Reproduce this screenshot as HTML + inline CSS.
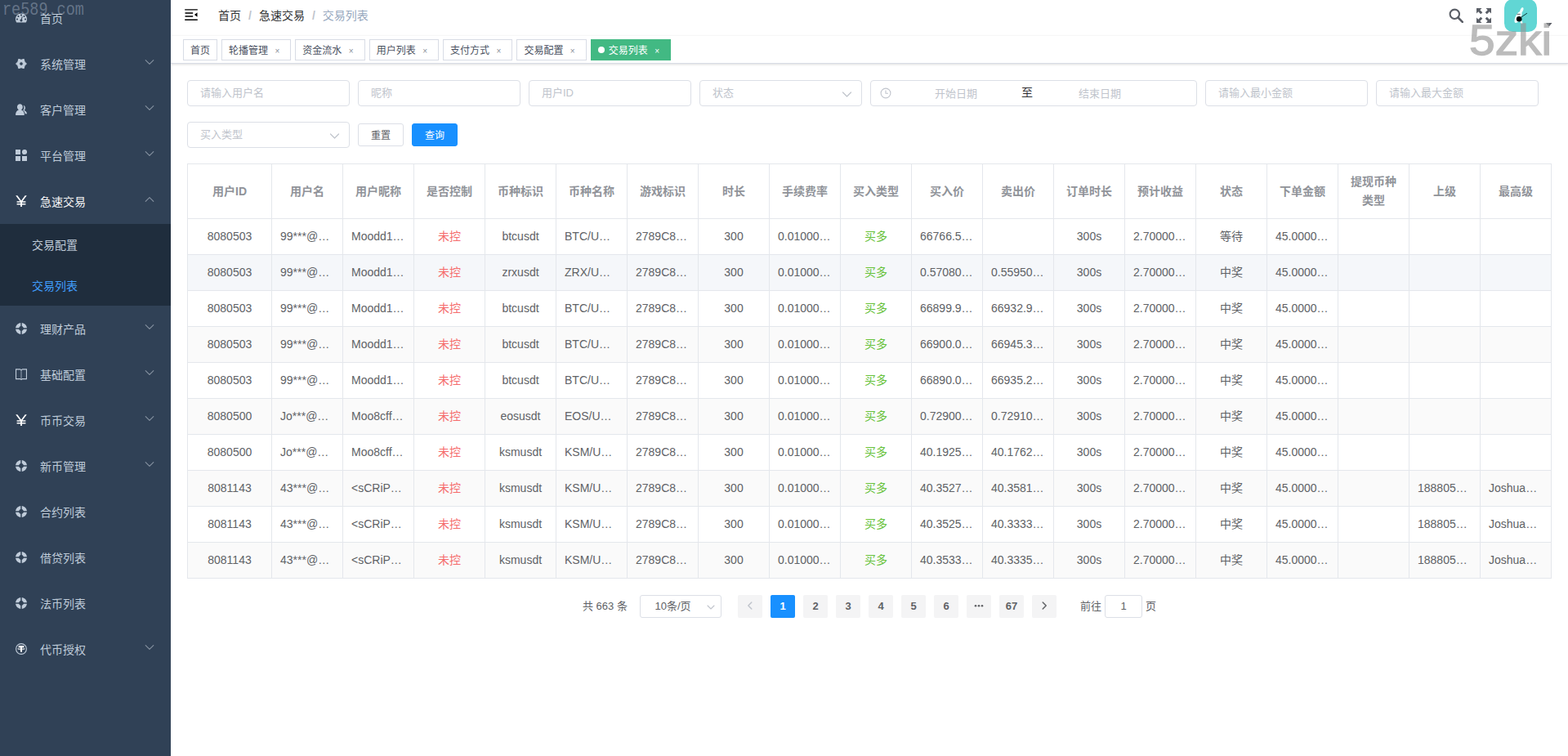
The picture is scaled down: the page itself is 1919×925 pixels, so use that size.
<!DOCTYPE html>
<html lang="zh-CN">
<head>
<meta charset="utf-8">
<title>交易列表</title>
<style>
*{box-sizing:border-box;}
html,body{margin:0;padding:0;}
body{width:1919px;height:925px;overflow:hidden;background:#fff;position:relative;
  font-family:"Liberation Sans","Noto Sans CJK SC",sans-serif;font-size:14px;color:#606266;
  -webkit-font-smoothing:antialiased;text-rendering:optimizeLegibility;}
svg{display:inline-block;}
/* ---------- sidebar ---------- */
#sidebar{position:absolute;left:0;top:0;width:209px;height:925px;background:#304156;overflow:hidden;}
#menu{position:absolute;left:-1px;top:-6px;width:210px;margin:0;padding:0;list-style:none;}
#menu li{list-style:none;margin:0;padding:0;}
#menu .mi{position:relative;height:56px;line-height:56px;padding-left:20px;font-size:14px;color:#bfcbd9;white-space:nowrap;}
#menu .mi svg.ic{width:14px;height:14px;vertical-align:-2.1px;margin-right:16px;fill:currentColor;overflow:hidden;}
#menu .mi>span.tx,#menu .si>span{position:relative;top:1px;}
#menu .mi .arr{position:absolute;right:20px;top:50%;margin-top:-8px;width:12px;height:12px;}
#menu .mi .arr svg{display:block;width:12px;height:12px;}
.sub{background:#1f2d3d;margin:0;padding:0;}
#menu .sub .si{height:50px;line-height:50px;padding-left:40px;font-size:14px;color:#bfcbd9;}
#menu .sub .si.on{color:#409eff;}
/* ---------- navbar ---------- */
#main{position:absolute;left:209px;top:0;width:1710px;height:925px;overflow:hidden;}
#navbar{position:absolute;left:0;top:-6px;width:1710px;height:50px;background:#fff;box-shadow:0 1px 4px rgba(0,21,41,.08);}
#ham{position:absolute;left:0;top:0;height:50px;padding:0 15px;line-height:46px;}
#ham svg{width:20px;height:20px;vertical-align:middle;}
#bc{position:absolute;left:58px;top:0;height:50px;line-height:50px;font-size:14px;white-space:nowrap;}
#bc span.a{color:#303133;}
#bc span.s{margin:0 9px;color:#c0c4cc;font-weight:700;}
#bc span.l{color:#97a8be;}
#rm{position:absolute;right:0;top:0;height:50px;}
/* ---------- tags ---------- */
#tags{position:absolute;left:0;top:44px;width:1710px;height:34px;background:#fff;border-bottom:1px solid #d8dce5;
  box-shadow:0 1px 3px 0 rgba(0,0,0,.12),0 0 3px 0 rgba(0,0,0,.04);white-space:nowrap;font-size:0;}
.tag{display:inline-block;position:relative;height:26px;line-height:24px;border:1px solid #d8dce5;color:#495060;background:#fff;
  padding:0 8px;font-size:12px;margin-left:5px;margin-top:4px;vertical-align:top;}
.tag:first-child{margin-left:15px;}
.tag .x{display:inline-block;width:16px;height:16px;line-height:16px;text-align:center;vertical-align:-1px;margin-left:3.33px;font-size:10px;color:#8c919b;}
.tag.on{background:#42b983;color:#fff;border-color:#42b983;}
.tag.on .x{color:#fff;}
.tag .tx{position:relative;top:1px;}
.tag.on:before{content:"";background:#fff;display:inline-block;width:8px;height:8px;border-radius:50%;position:relative;margin-right:5px;}
/* ---------- content ---------- */
#content{position:absolute;left:0;top:78px;width:1710px;padding:20px;}
.inp{position:absolute;height:32px;border:1px solid #dcdfe6;border-radius:4px;background:#fff;font-size:13px;color:#c0c4cc;line-height:30px;padding:0 15px;white-space:nowrap;}
.btn{position:absolute;height:28px;line-height:28px;border:1px solid #dcdfe6;border-radius:3px;background:#fff;color:#606266;font-size:12px;text-align:center;padding:0;}
.btn.pri{background:#1890ff;border-color:#1890ff;color:#fff;}
/* ---------- table ---------- */
#tbl{position:absolute;left:20px;top:200px;width:1670px;border-collapse:separate;border-spacing:0;table-layout:fixed;
  border-top:1px solid #e4e7ec;border-left:1px solid #e4e7ec;font-size:14px;color:#606266;}
#tbl th,#tbl td{border-right:1px solid #e4e7ec;border-bottom:1px solid #e4e7ec;padding:10px 0;text-align:center;vertical-align:middle;}
#tbl th{color:#909399;font-weight:bold;background:#fff;}
#tbl .c{padding:0 10px;line-height:23px;white-space:nowrap;overflow:hidden;}
#tbl th .c{white-space:normal;}
#tbl td.t{text-align:left;}
#tbl tr.st td{background:#fafafa;}
#tbl tr.hv td{background:#f5f7fa;}
.r{color:#f56c6c;} .g{color:#67c23a;}
/* ---------- pagination ---------- */
#pg{position:absolute;left:0;top:0;width:1710px;height:0;font-size:13px;color:#606266;}
#pg>*{position:absolute;}
.pb{height:28px;line-height:28px;min-width:30px;border-radius:2px;background:#f4f4f5;color:#606266;font-weight:700;font-size:13px;text-align:center;}
.pb.on{background:#1890ff;color:#fff;}
/* ---------- watermark ---------- */
.wm1{position:absolute;left:3px;top:1.5px;font-family:"Liberation Mono","DejaVu Sans Mono",monospace;font-size:18.5px;line-height:24px;color:rgba(200,212,228,.36);white-space:nowrap;transform:scaleY(1.15);transform-origin:0 19px;}
.wm2{position:absolute;left:1797.5px;top:18px;font-family:"Liberation Sans",sans-serif;font-size:51px;line-height:64px;color:#969696;-webkit-text-stroke:1.3px #969696;opacity:.63;white-space:nowrap;transform:scaleX(1.115);transform-origin:0 0;}
</style>
</head>
<body>
<div id="sidebar"><ul id="menu">
<li class="mi"><svg class="ic" viewBox="0 0 128 100"><path d="M27.429 63.638c0-2.508-.893-4.65-2.679-6.424-1.786-1.775-3.94-2.662-6.464-2.662-2.524 0-4.679.887-6.465 2.662-1.785 1.774-2.678 3.916-2.678 6.424 0 2.508.893 4.65 2.678 6.424 1.786 1.775 3.94 2.662 6.465 2.662 2.524 0 4.678-.887 6.464-2.662 1.786-1.775 2.679-3.916 2.679-6.424zm13.714-31.801c0-2.508-.893-4.649-2.679-6.424-1.785-1.775-3.94-2.662-6.464-2.662-2.524 0-4.679.887-6.464 2.662-1.786 1.775-2.679 3.916-2.679 6.424 0 2.508.893 4.65 2.679 6.424 1.785 1.774 3.94 2.662 6.464 2.662 2.524 0 4.679-.888 6.464-2.662 1.786-1.775 2.679-3.916 2.679-6.424zM71.714 65.98l7.215-27.116c.285-1.23.107-2.378-.536-3.443-.643-1.064-1.56-1.762-2.75-2.094-1.19-.33-2.333-.177-3.429.462-1.095.639-1.81 1.573-2.143 2.804l-7.214 27.116c-2.857.237-5.405 1.266-7.643 3.088-2.238 1.822-3.738 4.152-4.5 6.992-.952 3.644-.476 7.098 1.429 10.364 1.905 3.265 4.69 5.37 8.357 6.317 3.667.947 7.143.474 10.429-1.42 3.285-1.892 5.404-4.66 6.357-8.305.762-2.84.619-5.607-.429-8.305-1.047-2.697-2.762-4.85-5.143-6.46zm47.143-2.342c0-2.508-.893-4.65-2.678-6.424-1.786-1.775-3.94-2.662-6.465-2.662-2.524 0-4.678.887-6.464 2.662-1.786 1.774-2.679 3.916-2.679 6.424 0 2.508.893 4.65 2.679 6.424 1.786 1.775 3.94 2.662 6.464 2.662 2.524 0 4.679-.887 6.465-2.662 1.785-1.775 2.678-3.916 2.678-6.424zm-45.714-45.43c0-2.509-.893-4.65-2.679-6.425C68.68 10.01 66.524 9.122 64 9.122c-2.524 0-4.679.887-6.464 2.661-1.786 1.775-2.679 3.916-2.679 6.425 0 2.508.893 4.65 2.679 6.424 1.785 1.774 3.94 2.662 6.464 2.662 2.524 0 4.679-.888 6.464-2.662 1.786-1.775 2.679-3.916 2.679-6.424zm32 13.629c0-2.508-.893-4.649-2.679-6.424-1.785-1.775-3.94-2.662-6.464-2.662-2.524 0-4.679.887-6.464 2.662-1.786 1.775-2.679 3.916-2.679 6.424 0 2.508.893 4.65 2.679 6.424 1.785 1.774 3.94 2.662 6.464 2.662 2.524 0 4.679-.888 6.464-2.662 1.786-1.775 2.679-3.916 2.679-6.424zM128 63.638c0 12.351-3.357 23.78-10.071 34.286-.905 1.372-2.19 2.058-3.858 2.058H13.93c-1.667 0-2.953-.686-3.858-2.058C3.357 87.465 0 76.037 0 63.638c0-8.613 1.69-16.847 5.071-24.703C8.452 31.08 13 24.312 18.714 18.634c5.715-5.68 12.524-10.199 20.429-13.559C47.048 1.715 55.333.035 64 .035c8.667 0 16.952 1.68 24.857 5.04 7.905 3.36 14.714 7.88 20.429 13.559 5.714 5.678 10.262 12.446 13.643 20.301 3.38 7.856 5.071 16.09 5.071 24.703z"/></svg><span class="tx">首页</span></li>
<li class="mi"><svg class="ic" viewBox="0 0 14 14"><path fill-rule="evenodd" stroke="currentColor" stroke-width="1.0" stroke-linejoin="round" d="M13.50,7.00 L11.07,9.35 L10.25,12.63 L7.00,11.70 L3.75,12.63 L2.93,9.35 L0.50,7.00 L2.93,4.65 L3.75,1.37 L7.00,2.30 L10.25,1.37 L11.07,4.65 Z M7 4.7 a2.3 2.3 0 1 0 0.001 0 Z"/></svg><span class="tx">系统管理</span><span class="arr"><svg viewBox="0 0 12 12"><path d="M1.2 3.6 L6 8.4 L10.8 3.6" fill="none" stroke="#8591a0" stroke-width="1.1" stroke-linecap="round" stroke-linejoin="round"/></svg></span></li>
<li class="mi"><svg class="ic" viewBox="0 0 14 14"><path d="M9.6 2.1c1.5 0.2 2.4 1.5 2.4 3.0 0 1.2-.5 2.2-1.3 2.8 1.7.6 3.1 2.2 3.3 4.3h-2.2c-.3-1.9-1.3-3.4-2.7-4.3.8-.8 1.3-1.9 1.300-3.200 0-1-.3-1.900-.800-2.600z"/><path d="M5.4 0.2c1.9 0 3.4 1.700 3.400 3.900 0 1.500-.7 2.800-1.800 3.400 2.300.7 3.700 2.700 3.900 5.700 0 .5-.3.700-.7.700H.7c-.4 0-.7-.3-.7-.7.2-3 1.600-5 3.900-5.700C2.800 6.900 2 5.600 2 4.100 2 1.900 3.500.2 5.400.2z"/></svg><span class="tx">客户管理</span><span class="arr"><svg viewBox="0 0 12 12"><path d="M1.2 3.6 L6 8.4 L10.8 3.6" fill="none" stroke="#8591a0" stroke-width="1.1" stroke-linecap="round" stroke-linejoin="round"/></svg></span></li>
<li class="mi"><svg class="ic" viewBox="0 0 14 14"><rect x="0" y="0" width="6" height="6"/><rect x="0" y="8" width="6" height="6"/><rect x="8" y="8" width="6" height="6"/><circle cx="11" cy="3" r="3.1"/></svg><span class="tx">平台管理</span><span class="arr"><svg viewBox="0 0 12 12"><path d="M1.2 3.6 L6 8.4 L10.8 3.6" fill="none" stroke="#8591a0" stroke-width="1.1" stroke-linecap="round" stroke-linejoin="round"/></svg></span></li>
<li class="mi" style="color:#f4f4f5"><svg class="ic" viewBox="0 0 14 14" style="fill:#fff"><path d="M0.2 0.3h2.2L7 6.5 11.6 0.3h2.2L8.5 7.2h3.9v1.6H7.9v1.2h4.5v1.6H7.9v2.4H6.1v-2.4H1.6V10h4.5V8.800H1.6V7.200h3.900z"/></svg><span class="tx">急速交易</span><span class="arr"><svg viewBox="0 0 12 12"><path d="M1.2 8.4 L6 3.6 L10.8 8.4" fill="none" stroke="#8591a0" stroke-width="1.1" stroke-linecap="round" stroke-linejoin="round"/></svg></span></li>
<li><ul class="sub"><li class="si"><span>交易配置</span></li><li class="si on"><span>交易列表</span></li></ul></li>
<li class="mi"><svg class="ic" viewBox="0 0 14 14"><path fill-rule="evenodd" d="M7 0a7 7 0 1 0 0.001 0Z M7 4.100a2.900 2.900 0 1 1-.001 0Z"/><path d="M7 0V14M0 7H14" stroke="#304156" stroke-opacity="1" stroke-width="1.500" fill="none"/></svg><span class="tx">理财产品</span><span class="arr"><svg viewBox="0 0 12 12"><path d="M1.2 3.6 L6 8.4 L10.8 3.6" fill="none" stroke="#8591a0" stroke-width="1.1" stroke-linecap="round" stroke-linejoin="round"/></svg></span></li>
<li class="mi"><svg class="ic" viewBox="0 0 14 14"><path fill="none" stroke="currentColor" stroke-width="1.1" d="M0.55 0.9H5.6L7 1.900 8.400 0.900H13.450V12.600H8.400L7 13.500 5.600 12.600H0.550Z"/><path d="M7 1.900V13.200" stroke="currentColor" stroke-opacity=".6" stroke-width="1.2" fill="none"/></svg><span class="tx">基础配置</span><span class="arr"><svg viewBox="0 0 12 12"><path d="M1.2 3.6 L6 8.4 L10.8 3.6" fill="none" stroke="#8591a0" stroke-width="1.1" stroke-linecap="round" stroke-linejoin="round"/></svg></span></li>
<li class="mi"><svg class="ic" viewBox="0 0 14 14" style="fill:#fff"><path d="M0.2 0.3h2.2L7 6.5 11.6 0.3h2.2L8.5 7.2h3.9v1.6H7.9v1.2h4.5v1.6H7.9v2.4H6.1v-2.4H1.6V10h4.5V8.800H1.6V7.200h3.900z"/></svg><span class="tx">币币交易</span><span class="arr"><svg viewBox="0 0 12 12"><path d="M1.2 3.6 L6 8.4 L10.8 3.6" fill="none" stroke="#8591a0" stroke-width="1.1" stroke-linecap="round" stroke-linejoin="round"/></svg></span></li>
<li class="mi"><svg class="ic" viewBox="0 0 14 14"><path fill-rule="evenodd" d="M7 0a7 7 0 1 0 0.001 0Z M7 4.100a2.900 2.900 0 1 1-.001 0Z"/><path d="M7 0V14M0 7H14" stroke="#304156" stroke-opacity="1" stroke-width="1.500" fill="none"/></svg><span class="tx">新币管理</span><span class="arr"><svg viewBox="0 0 12 12"><path d="M1.2 3.6 L6 8.4 L10.8 3.6" fill="none" stroke="#8591a0" stroke-width="1.1" stroke-linecap="round" stroke-linejoin="round"/></svg></span></li>
<li class="mi"><svg class="ic" viewBox="0 0 14 14"><path fill-rule="evenodd" d="M7 0a7 7 0 1 0 0.001 0Z M7 4.100a2.900 2.900 0 1 1-.001 0Z"/><path d="M7 0V14M0 7H14" stroke="#304156" stroke-opacity="1" stroke-width="1.500" fill="none"/></svg><span class="tx">合约列表</span></li>
<li class="mi"><svg class="ic" viewBox="0 0 14 14"><path fill-rule="evenodd" d="M7 0a7 7 0 1 0 0.001 0Z M7 4.100a2.900 2.900 0 1 1-.001 0Z"/><path d="M7 0V14M0 7H14" stroke="#304156" stroke-opacity="1" stroke-width="1.500" fill="none"/></svg><span class="tx">借贷列表</span></li>
<li class="mi"><svg class="ic" viewBox="0 0 14 14"><path fill-rule="evenodd" d="M7 0a7 7 0 1 0 0.001 0Z M7 4.100a2.900 2.900 0 1 1-.001 0Z"/><path d="M7 0V14M0 7H14" stroke="#304156" stroke-opacity="1" stroke-width="1.500" fill="none"/></svg><span class="tx">法币列表</span></li>
<li class="mi"><svg class="ic" viewBox="0 0 14 14"><circle cx="7" cy="7" r="6.400" fill="none" stroke="currentColor" stroke-width="1.1"/><path style="fill:#fff" d="M3.700 3.100h6.600v1.800H8v5.900H6V4.900H3.700z"/><ellipse cx="7" cy="6.800" rx="4.300" ry="1" fill="none" stroke="#fff" stroke-width=".8"/></svg><span class="tx">代币授权</span><span class="arr"><svg viewBox="0 0 12 12"><path d="M1.2 3.6 L6 8.4 L10.8 3.6" fill="none" stroke="#8591a0" stroke-width="1.1" stroke-linecap="round" stroke-linejoin="round"/></svg></span></li>
</ul><div class="wm1">re589.com</div></div>
<div id="main">
<div id="navbar">
<div id="ham"><svg viewBox="0 0 1024 1024" style="transform:rotate(180deg)"><path fill="#000" d="M408 442h480c4.4 0 8-3.6 8-8v-56c0-4.4-3.6-8-8-8H408c-4.4 0-8 3.6-8 8v56c0 4.4 3.6 8 8 8zm-8 204c0 4.4 3.6 8 8 8h480c4.4 0 8-3.6 8-8v-56c0-4.4-3.6-8-8-8H408c-4.400 0-8 3.600-8 8v56zm504-486H120c-4.400 0-8 3.600-8 8v56c0 4.400 3.600 8 8 8h784c4.400 0 8-3.600 8-8v-56c0-4.400-3.600-8-8-8zm0 632H120c-4.400 0-8 3.600-8 8v56c0 4.400 3.600 8 8 8h784c4.400 0 8-3.600 8-8v-56c0-4.400-3.600-8-8-8zM142.400 642.100L298.700 519a8.840 8.840 0 0 0 0-13.900L142.400 381.900c-5.800-4.600-14.400-.5-14.400 6.900v246.300a8.900 8.900 0 0 0 14.400 7z"/></svg></div>
<div id="bc"><span class="a">首页</span><span class="s">/</span><span class="a">急速交易</span><span class="s">/</span><span class="l">交易列表</span></div>
<svg style="position:absolute;left:1563.8px;top:15.6px;width:18px;height:18px" viewBox="0 0 18 18"><circle cx="7.300" cy="7.300" r="5.700" fill="none" stroke="#5a5e66" stroke-width="2.100"/><path d="M11.500 11.500L16.800 16.800" stroke="#5a5e66" stroke-width="2.600" stroke-linecap="round"/></svg>
<svg style="position:absolute;left:1598px;top:16px;width:18px;height:18px" viewBox="0 0 18 18" fill="#5a5e66"><path d="M0 0h6.500L4.300 2.200 7.300 5.200 5.200 7.300 2.200 4.300 0 6.500z"/><path d="M18 0v6.500L15.800 4.300 12.800 7.300 10.700 5.200 13.700 2.200 11.500 0z"/><path d="M0 18v-6.500L2.200 13.700 5.200 10.700 7.300 12.800 4.300 15.800 6.500 18z"/><path d="M18 18h-6.500L13.700 15.800 10.700 12.800 12.800 10.700 15.800 13.700 18 11.500z"/></svg>
<svg style="position:absolute;left:1632px;top:5px;width:40px;height:40px" viewBox="0 0 40 40"><rect width="40" height="40" rx="10.5" fill="#61d6d4"/><g fill="#f2fffe"><ellipse cx="17" cy="22" rx="3.300" ry="7.800" transform="rotate(27 17 22)"/><ellipse cx="21.300" cy="13.500" rx="1.700" ry="3.600" transform="rotate(24 21.300 13.500)"/><ellipse cx="21" cy="28.200" rx="1.300" ry="2.200" transform="rotate(-20 21 28.200)"/></g><circle cx="18.200" cy="24.300" r="3.300" fill="#000"/><path d="M21 21.800L27.600 17.400" stroke="#0d3b3a" stroke-width="1" stroke-linecap="round"/><path d="M15.500 18.400h4.200" stroke="#222" stroke-width=".7"/></svg>
<svg style="position:absolute;left:1683px;top:33.5px;width:7.5px;height:4.5px" viewBox="0 0 10 6"><path d="M0 0h10L5 6z" fill="#5a5e66"/></svg>
</div>
<div id="tags">
<span class="tag"><span class="tx">首页</span></span>
<span class="tag"><span class="tx">轮播管理</span><span class="x">×</span></span>
<span class="tag"><span class="tx">资金流水</span><span class="x">×</span></span>
<span class="tag"><span class="tx">用户列表</span><span class="x">×</span></span>
<span class="tag"><span class="tx">支付方式</span><span class="x">×</span></span>
<span class="tag"><span class="tx">交易配置</span><span class="x">×</span></span>
<span class="tag on"><span class="tx">交易列表</span><span class="x">×</span></span>
</div>
<div class="inp" style="left:20px;top:98px;width:199px">请输入用户名</div>
<div class="inp" style="left:229px;top:98px;width:199px">昵称</div>
<div class="inp" style="left:438px;top:98px;width:199px">用户ID</div>
<div class="inp" style="left:647px;top:98px;width:199px">状态<svg style="position:absolute;right:11px;top:10px;width:13px;height:13px" viewBox="0 0 13 13"><path d="M1.500 4L6.500 9 11.500 4" fill="none" stroke="#c0c4cc" stroke-width="1.200" stroke-linecap="round" stroke-linejoin="round"/></svg></div>
<div class="inp" style="left:856px;top:98px;width:400px;padding:0"><svg style="position:absolute;left:11px;top:8px;width:14px;height:14px" viewBox="0 0 14 14"><circle cx="7" cy="7" r="5.900" fill="none" stroke="#c0c4cc" stroke-width="1.100"/><path d="M7 3.500V7.300H10" fill="none" stroke="#c0c4cc" stroke-width="1.100"/></svg><span style="position:absolute;left:30px;width:148px;text-align:center;top:1px">开始日期</span><span style="position:absolute;left:184px;top:-1px;color:#303133;font-size:14px">至</span><span style="position:absolute;left:206px;width:148px;text-align:center;top:1px">结束日期</span></div>
<div class="inp" style="left:1266px;top:98px;width:199px">请输入最小金额</div>
<div class="inp" style="left:1475px;top:98px;width:199px">请输入最大金额</div>
<div class="inp" style="left:20px;top:149px;width:199px">买入类型<svg style="position:absolute;right:11px;top:10px;width:13px;height:13px" viewBox="0 0 13 13"><path d="M1.500 4L6.500 9 11.500 4" fill="none" stroke="#c0c4cc" stroke-width="1.200" stroke-linecap="round" stroke-linejoin="round"/></svg></div>
<div class="btn" style="left:229px;top:151px;width:56px">重置</div>
<div class="btn pri" style="left:295px;top:151px;width:56px">查询</div>
<table id="tbl"><colgroup><col style="width:103px"><col style="width:87px"><col style="width:87px"><col style="width:87px"><col style="width:87px"><col style="width:87px"><col style="width:87px"><col style="width:87px"><col style="width:87px"><col style="width:87px"><col style="width:87px"><col style="width:87px"><col style="width:87px"><col style="width:87px"><col style="width:87px"><col style="width:87px"><col style="width:87px"><col style="width:87px"><col style="width:87px"></colgroup>
<thead><tr><th><div class="c">用户ID</div></th><th><div class="c">用户名</div></th><th><div class="c">用户昵称</div></th><th><div class="c">是否控制</div></th><th><div class="c">币种标识</div></th><th><div class="c">币种名称</div></th><th><div class="c">游戏标识</div></th><th><div class="c">时长</div></th><th><div class="c">手续费率</div></th><th><div class="c">买入类型</div></th><th><div class="c">买入价</div></th><th><div class="c">卖出价</div></th><th><div class="c">订单时长</div></th><th><div class="c">预计收益</div></th><th><div class="c">状态</div></th><th><div class="c">下单金额</div></th><th><div class="c">提现币种类型</div></th><th><div class="c">上级</div></th><th><div class="c">最高级</div></th></tr></thead><tbody>
<tr><td><div class="c">8080503</div></td><td class="t"><div class="c">99***@…</div></td><td class="t"><div class="c">Moodd1…</div></td><td><div class="c"><span class="r">未控</span></div></td><td><div class="c">btcusdt</div></td><td class="t"><div class="c">BTC/U…</div></td><td class="t"><div class="c">2789C8…</div></td><td><div class="c">300</div></td><td class="t"><div class="c">0.01000…</div></td><td><div class="c"><span class="g">买多</span></div></td><td class="t"><div class="c">66766.5…</div></td><td><div class="c"></div></td><td><div class="c">300s</div></td><td class="t"><div class="c">2.70000…</div></td><td><div class="c">等待</div></td><td class="t"><div class="c">45.0000…</div></td><td><div class="c"></div></td><td><div class="c"></div></td><td><div class="c"></div></td></tr>
<tr class="hv"><td><div class="c">8080503</div></td><td class="t"><div class="c">99***@…</div></td><td class="t"><div class="c">Moodd1…</div></td><td><div class="c"><span class="r">未控</span></div></td><td><div class="c">zrxusdt</div></td><td class="t"><div class="c">ZRX/U…</div></td><td class="t"><div class="c">2789C8…</div></td><td><div class="c">300</div></td><td class="t"><div class="c">0.01000…</div></td><td><div class="c"><span class="g">买多</span></div></td><td class="t"><div class="c">0.57080…</div></td><td class="t"><div class="c">0.55950…</div></td><td><div class="c">300s</div></td><td class="t"><div class="c">2.70000…</div></td><td><div class="c">中奖</div></td><td class="t"><div class="c">45.0000…</div></td><td><div class="c"></div></td><td><div class="c"></div></td><td><div class="c"></div></td></tr>
<tr><td><div class="c">8080503</div></td><td class="t"><div class="c">99***@…</div></td><td class="t"><div class="c">Moodd1…</div></td><td><div class="c"><span class="r">未控</span></div></td><td><div class="c">btcusdt</div></td><td class="t"><div class="c">BTC/U…</div></td><td class="t"><div class="c">2789C8…</div></td><td><div class="c">300</div></td><td class="t"><div class="c">0.01000…</div></td><td><div class="c"><span class="g">买多</span></div></td><td class="t"><div class="c">66899.9…</div></td><td class="t"><div class="c">66932.9…</div></td><td><div class="c">300s</div></td><td class="t"><div class="c">2.70000…</div></td><td><div class="c">中奖</div></td><td class="t"><div class="c">45.0000…</div></td><td><div class="c"></div></td><td><div class="c"></div></td><td><div class="c"></div></td></tr>
<tr class="st"><td><div class="c">8080503</div></td><td class="t"><div class="c">99***@…</div></td><td class="t"><div class="c">Moodd1…</div></td><td><div class="c"><span class="r">未控</span></div></td><td><div class="c">btcusdt</div></td><td class="t"><div class="c">BTC/U…</div></td><td class="t"><div class="c">2789C8…</div></td><td><div class="c">300</div></td><td class="t"><div class="c">0.01000…</div></td><td><div class="c"><span class="g">买多</span></div></td><td class="t"><div class="c">66900.0…</div></td><td class="t"><div class="c">66945.3…</div></td><td><div class="c">300s</div></td><td class="t"><div class="c">2.70000…</div></td><td><div class="c">中奖</div></td><td class="t"><div class="c">45.0000…</div></td><td><div class="c"></div></td><td><div class="c"></div></td><td><div class="c"></div></td></tr>
<tr><td><div class="c">8080503</div></td><td class="t"><div class="c">99***@…</div></td><td class="t"><div class="c">Moodd1…</div></td><td><div class="c"><span class="r">未控</span></div></td><td><div class="c">btcusdt</div></td><td class="t"><div class="c">BTC/U…</div></td><td class="t"><div class="c">2789C8…</div></td><td><div class="c">300</div></td><td class="t"><div class="c">0.01000…</div></td><td><div class="c"><span class="g">买多</span></div></td><td class="t"><div class="c">66890.0…</div></td><td class="t"><div class="c">66935.2…</div></td><td><div class="c">300s</div></td><td class="t"><div class="c">2.70000…</div></td><td><div class="c">中奖</div></td><td class="t"><div class="c">45.0000…</div></td><td><div class="c"></div></td><td><div class="c"></div></td><td><div class="c"></div></td></tr>
<tr class="st"><td><div class="c">8080500</div></td><td class="t"><div class="c">Jo***@…</div></td><td class="t"><div class="c">Moo8cff…</div></td><td><div class="c"><span class="r">未控</span></div></td><td><div class="c">eosusdt</div></td><td class="t"><div class="c">EOS/U…</div></td><td class="t"><div class="c">2789C8…</div></td><td><div class="c">300</div></td><td class="t"><div class="c">0.01000…</div></td><td><div class="c"><span class="g">买多</span></div></td><td class="t"><div class="c">0.72900…</div></td><td class="t"><div class="c">0.72910…</div></td><td><div class="c">300s</div></td><td class="t"><div class="c">2.70000…</div></td><td><div class="c">中奖</div></td><td class="t"><div class="c">45.0000…</div></td><td><div class="c"></div></td><td><div class="c"></div></td><td><div class="c"></div></td></tr>
<tr><td><div class="c">8080500</div></td><td class="t"><div class="c">Jo***@…</div></td><td class="t"><div class="c">Moo8cff…</div></td><td><div class="c"><span class="r">未控</span></div></td><td><div class="c">ksmusdt</div></td><td class="t"><div class="c">KSM/U…</div></td><td class="t"><div class="c">2789C8…</div></td><td><div class="c">300</div></td><td class="t"><div class="c">0.01000…</div></td><td><div class="c"><span class="g">买多</span></div></td><td class="t"><div class="c">40.1925…</div></td><td class="t"><div class="c">40.1762…</div></td><td><div class="c">300s</div></td><td class="t"><div class="c">2.70000…</div></td><td><div class="c">中奖</div></td><td class="t"><div class="c">45.0000…</div></td><td><div class="c"></div></td><td><div class="c"></div></td><td><div class="c"></div></td></tr>
<tr class="st"><td><div class="c">8081143</div></td><td class="t"><div class="c">43***@…</div></td><td class="t"><div class="c">&lt;sCRiP…</div></td><td><div class="c"><span class="r">未控</span></div></td><td><div class="c">ksmusdt</div></td><td class="t"><div class="c">KSM/U…</div></td><td class="t"><div class="c">2789C8…</div></td><td><div class="c">300</div></td><td class="t"><div class="c">0.01000…</div></td><td><div class="c"><span class="g">买多</span></div></td><td class="t"><div class="c">40.3527…</div></td><td class="t"><div class="c">40.3581…</div></td><td><div class="c">300s</div></td><td class="t"><div class="c">2.70000…</div></td><td><div class="c">中奖</div></td><td class="t"><div class="c">45.0000…</div></td><td><div class="c"></div></td><td class="t"><div class="c">188805…</div></td><td class="t"><div class="c">Joshua…</div></td></tr>
<tr><td><div class="c">8081143</div></td><td class="t"><div class="c">43***@…</div></td><td class="t"><div class="c">&lt;sCRiP…</div></td><td><div class="c"><span class="r">未控</span></div></td><td><div class="c">ksmusdt</div></td><td class="t"><div class="c">KSM/U…</div></td><td class="t"><div class="c">2789C8…</div></td><td><div class="c">300</div></td><td class="t"><div class="c">0.01000…</div></td><td><div class="c"><span class="g">买多</span></div></td><td class="t"><div class="c">40.3525…</div></td><td class="t"><div class="c">40.3333…</div></td><td><div class="c">300s</div></td><td class="t"><div class="c">2.70000…</div></td><td><div class="c">中奖</div></td><td class="t"><div class="c">45.0000…</div></td><td><div class="c"></div></td><td class="t"><div class="c">188805…</div></td><td class="t"><div class="c">Joshua…</div></td></tr>
<tr class="st"><td><div class="c">8081143</div></td><td class="t"><div class="c">43***@…</div></td><td class="t"><div class="c">&lt;sCRiP…</div></td><td><div class="c"><span class="r">未控</span></div></td><td><div class="c">ksmusdt</div></td><td class="t"><div class="c">KSM/U…</div></td><td class="t"><div class="c">2789C8…</div></td><td><div class="c">300</div></td><td class="t"><div class="c">0.01000…</div></td><td><div class="c"><span class="g">买多</span></div></td><td class="t"><div class="c">40.3533…</div></td><td class="t"><div class="c">40.3335…</div></td><td><div class="c">300s</div></td><td class="t"><div class="c">2.70000…</div></td><td><div class="c">中奖</div></td><td class="t"><div class="c">45.0000…</div></td><td><div class="c"></div></td><td class="t"><div class="c">188805…</div></td><td class="t"><div class="c">Joshua…</div></td></tr>
</tbody></table>
<div id="pg">
<span style="left:504px;top:728px;height:28px;line-height:28px">共 663 条</span>
<div style="left:574px;top:728px;width:100px;height:28px;border:1px solid #dcdfe6;border-radius:3px;line-height:26px;font-size:13px;color:#606266;text-align:center;padding-right:19px">10条/页<svg style="position:absolute;right:6px;top:8px;width:12px;height:12px" viewBox="0 0 12 12"><path d="M2 4L6 8 10 4" fill="none" stroke="#c0c4cc" stroke-width="1.100" stroke-linecap="round" stroke-linejoin="round"/></svg></div>
<div class="pb" style="left:694px;top:728px;width:30px"><svg style="width:12px;height:12px;vertical-align:-1px" viewBox="0 0 12 12"><path d="M7.800 2L3.800 6 7.800 10" fill="none" stroke="#c0c4cc" stroke-width="1.500" stroke-linecap="round" stroke-linejoin="round"/></svg></div>
<div class="pb on" style="left:734px;top:728px;width:30px">1</div>
<div class="pb" style="left:774px;top:728px;width:30px">2</div>
<div class="pb" style="left:814px;top:728px;width:30px">3</div>
<div class="pb" style="left:854px;top:728px;width:30px">4</div>
<div class="pb" style="left:894px;top:728px;width:30px">5</div>
<div class="pb" style="left:934px;top:728px;width:30px">6</div>
<div class="pb" style="left:974px;top:728px;width:30px"><svg style="width:12px;height:12px;vertical-align:-1px" viewBox="0 0 12 12" fill="#606266"><circle cx="2" cy="6.300" r="1.300"/><circle cx="6" cy="6.300" r="1.300"/><circle cx="10" cy="6.300" r="1.300"/></svg></div>
<div class="pb" style="left:1014px;top:728px;width:30px">67</div>
<div class="pb" style="left:1054px;top:728px;width:30px"><svg style="width:12px;height:12px;vertical-align:-1px" viewBox="0 0 12 12"><path d="M4.200 2L8.200 6 4.200 10" fill="none" stroke="#606266" stroke-width="1.500" stroke-linecap="round" stroke-linejoin="round"/></svg></div>
<span style="left:1113px;top:728px;height:28px;line-height:28px">前往</span>
<div style="left:1143px;top:728px;width:46px;height:28px;border:1px solid #dcdfe6;border-radius:3px;line-height:26px;text-align:center;color:#606266">1</div>
<span style="left:1193px;top:728px;height:28px;line-height:28px">页</span>
</div>
</div>
<div class="wm2">5zki</div>
</body>
</html>
